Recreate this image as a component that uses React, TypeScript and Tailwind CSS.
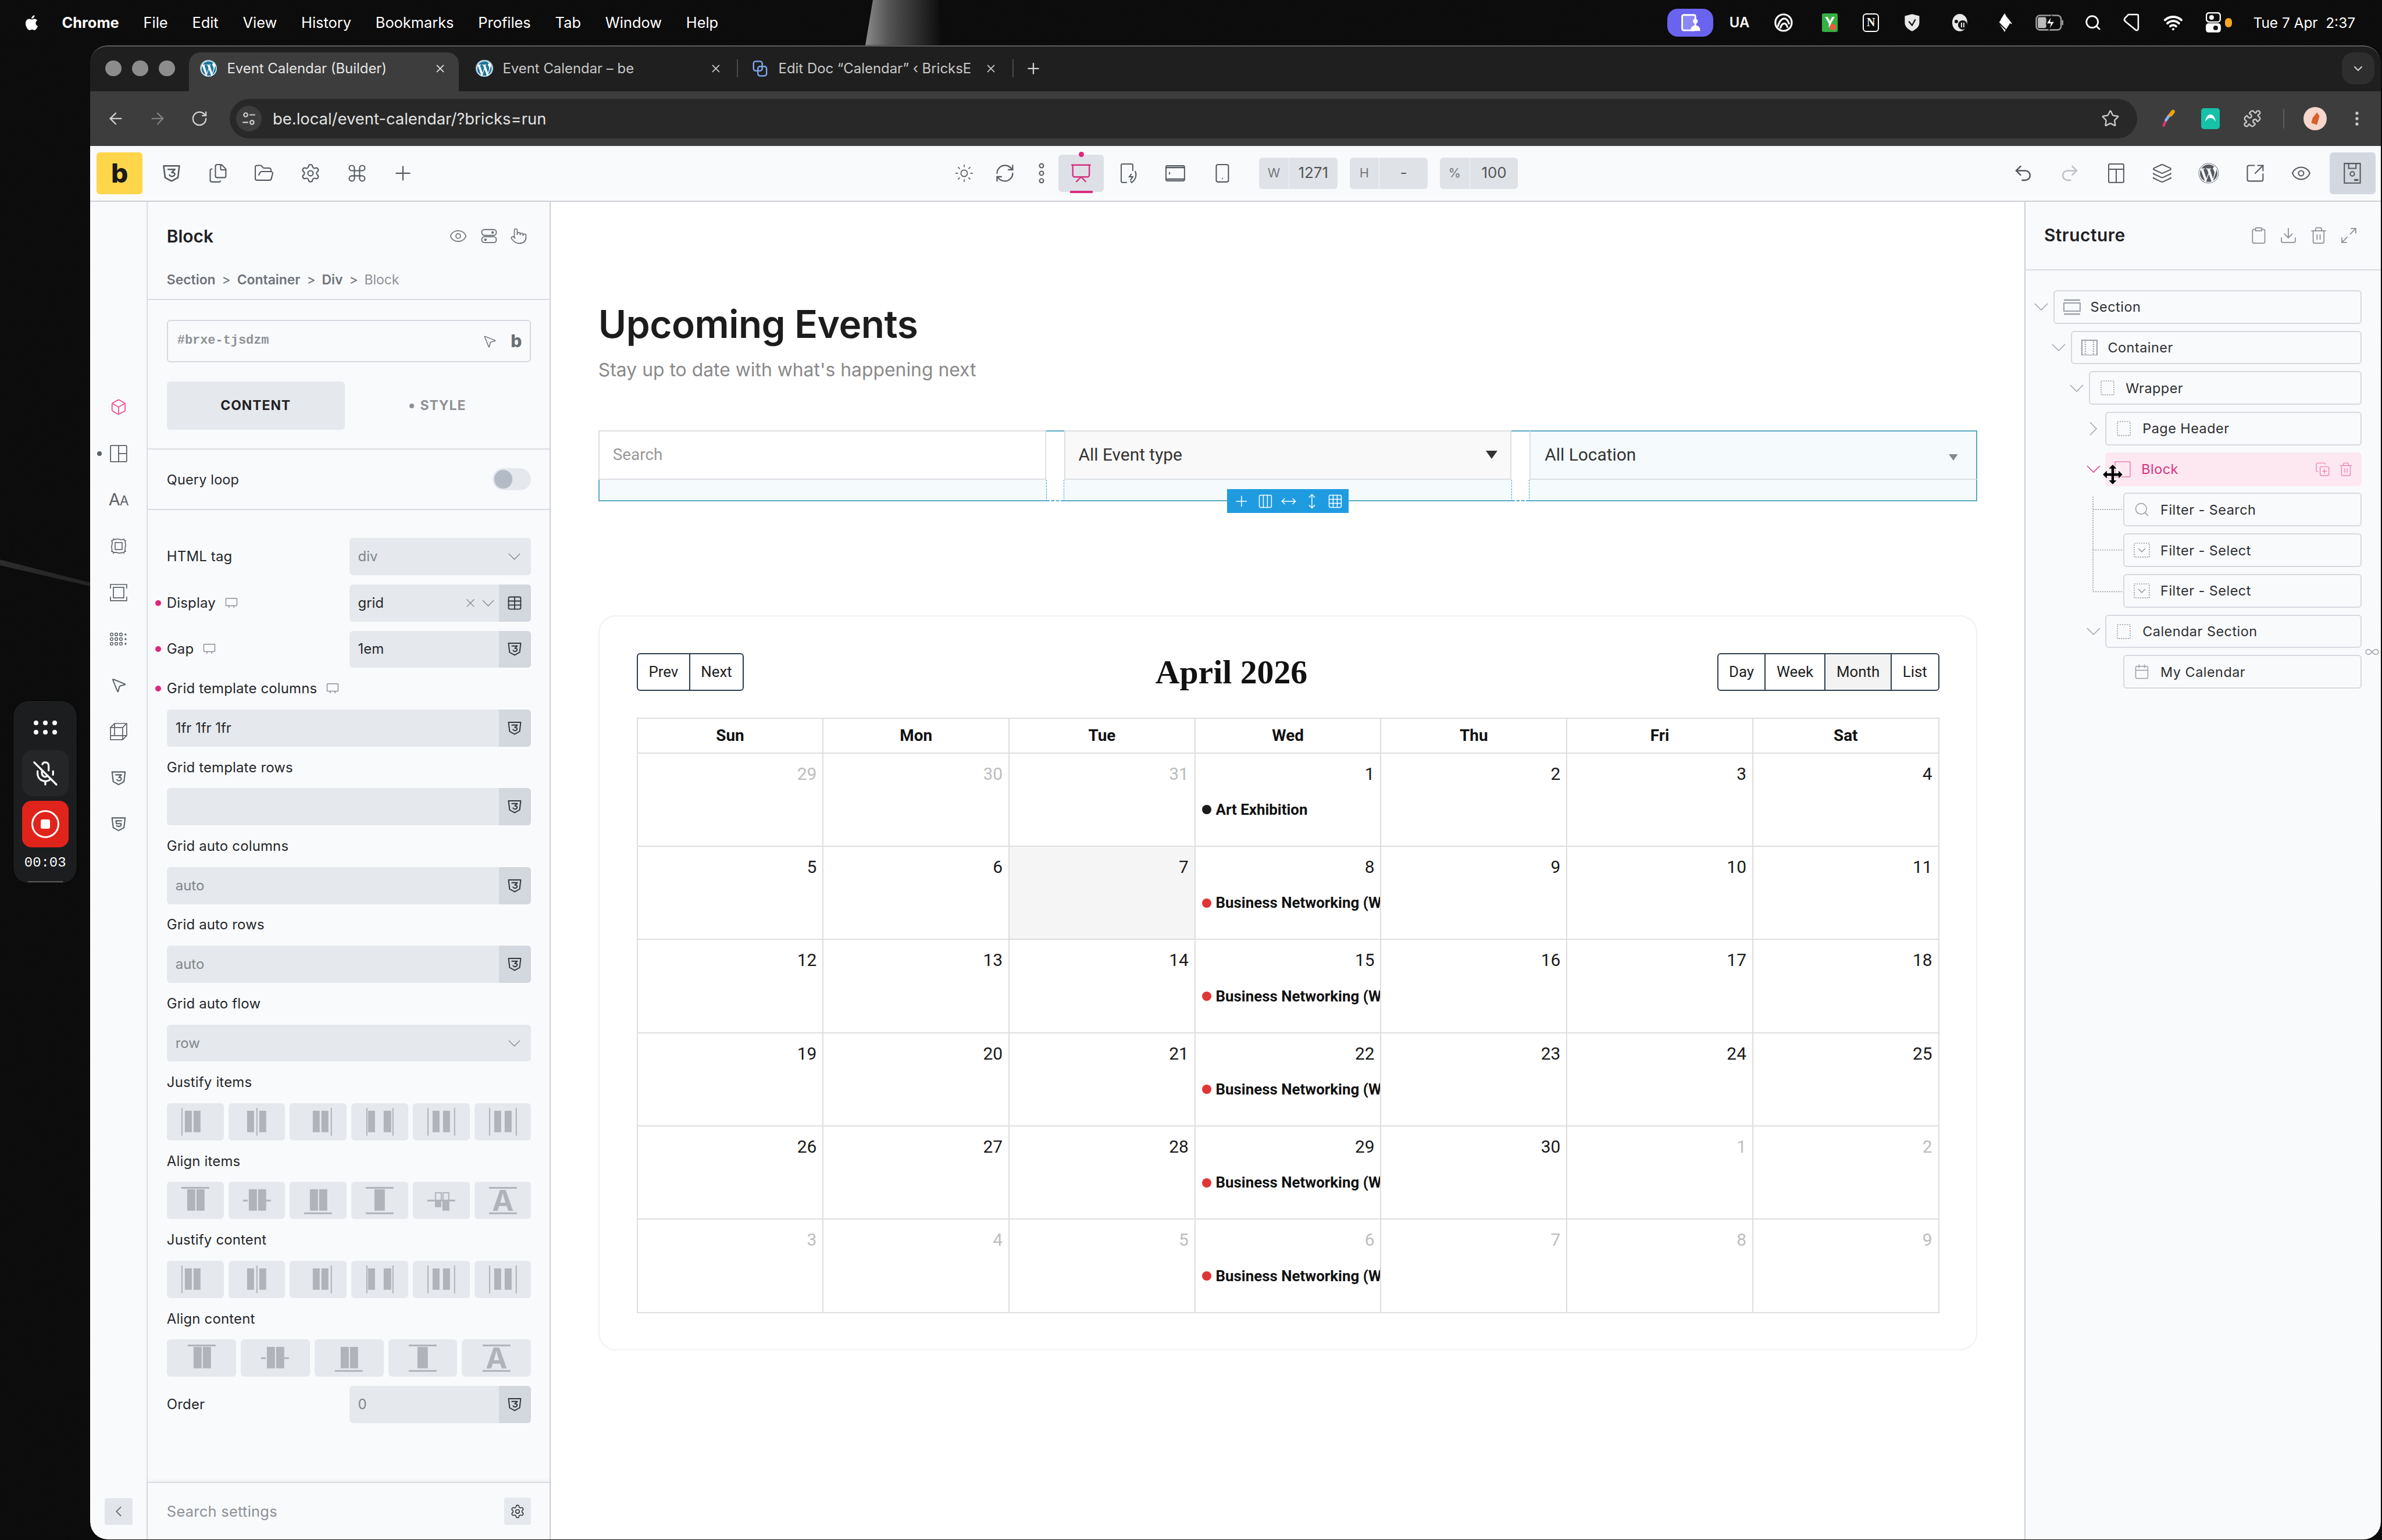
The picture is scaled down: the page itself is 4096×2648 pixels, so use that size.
import React from "react";
import { FaWordpress } from "react-icons/fa";
import {
  Eye, Settings, Command, Plus, ArrowLeft, ArrowRight, RotateCw, RefreshCw, Star, Sun, Search, Wifi, Box, Trash2, Download,
  Clipboard, ChevronDown, ChevronLeft, X, Grid3x3, Presentation, Smartphone, Undo2, Redo2, Layers,
  SquareArrowOutUpRight, Maximize2, MousePointer2, Pointer, Puzzle, MicOff, Files, FolderOpen, Calendar, CopyPlus,
  Infinity as InfinityIcon, Columns3, MoveHorizontal, MoveVertical, Table, EllipsisVertical,
} from "lucide-react";

const INTER = "font-['Inter',sans-serif]";

function Chev({ className = "", right = false }: { className?: string; right?: boolean }) {
  return right ? (
    <svg viewBox="0 0 14 26" className={className} fill="none" stroke="currentColor" strokeWidth="1.5"><path d="M1 1l12 12L1 25" /></svg>
  ) : (
    <svg viewBox="0 0 26 14" className={className} fill="none" stroke="currentColor" strokeWidth="1.5"><path d="M1 1l12 12L25 1" /></svg>
  );
}

function Css3({ className = "", five = false }: { className?: string; five?: boolean }) {
  return (
    <svg viewBox="0 0 24 24" fill="none" stroke="currentColor" strokeWidth="1.7" strokeLinejoin="round" strokeLinecap="round" className={className}>
      <path d="M3 3.5h18l-1.6 13.5L12 21l-7.4-4z" />
      {five ? <path d="M16 7.5H8.5l.4 4h6.6l-.4 3-3 1-3-1" /> : <path d="M8 7.5h8l-3.7 3.5c2.5 0 3.6.7 3.4 2.3-.2 1.6-2.2 2.7-4 2.2-1-.3-1.6-.7-2-1.4" />}
    </svg>
  );
}

function TwoBars({ className = "" }: { className?: string }) {
  return (
    <svg viewBox="0 0 24 24" fill="none" stroke="currentColor" strokeWidth="1.5" className={className}>
      <rect x="2" y="3" width="20" height="8" rx="3.5" />
      <rect x="2" y="13" width="20" height="8" rx="3.5" />
      <circle cx="17" cy="7" r="1" fill="currentColor" />
      <circle cx="7" cy="17" r="1" fill="currentColor" />
    </svg>
  );
}

function Wp({ className = "" }: { className?: string }) {
  return (
    <span className={"flex items-center justify-center rounded-full bg-white " + className}>
      <FaWordpress className="w-full h-full text-[#21759b]" />
    </span>
  );
}

function MenuBar() {
  const items = ["File", "Edit", "View", "History", "Bookmarks", "Profiles", "Tab", "Window", "Help"];
  return (
    <div className={"h-[78px] flex items-center text-white text-[25.5px] shrink-0 relative z-10 " + INTER}>
      <svg viewBox="0 0 24 24" fill="white" className="w-[32px] h-[34px] ml-[38px] mr-[37px]">
        <path d="M17.6 12.7c0-2.4 2-3.6 2.1-3.7-1.1-1.7-2.9-1.9-3.5-1.9-1.5-.2-2.9.9-3.7.9s-1.9-.9-3.2-.8c-1.6 0-3.1.9-4 2.4-1.7 2.9-.4 7.3 1.2 9.7.8 1.2 1.8 2.5 3.1 2.4 1.2 0 1.7-.8 3.2-.8s1.9.8 3.2.8 2.2-1.2 3-2.4c.9-1.4 1.3-2.7 1.3-2.8-.1 0-2.7-1-2.7-3.8zM15.1 5.5c.7-.8 1.1-2 1-3.1-1 0-2.2.7-2.9 1.5-.6.7-1.2 1.9-1 3 1.1.1 2.2-.6 2.9-1.4z" />
      </svg>
      <span className="font-bold mr-[42px]">Chrome</span>
      <div className="flex gap-[42px]">
        {items.map((m) => <span key={m}>{m}</span>)}
      </div>
      <div className="ml-auto mr-[34px] flex items-center">
        <div className="w-[80px] h-[48px] rounded-[18px] bg-[#6a63f0] flex items-center justify-center">
          <svg viewBox="0 0 30 30" className="w-[36px] h-[36px]" fill="none" stroke="white" strokeWidth="2.4">
            <rect x="3" y="4" width="19" height="22" rx="2" fill="#8d88f5" />
            <circle cx="22" cy="13" r="3.5" fill="white" stroke="none" />
            <path d="M15 27c0-6 3-8 7-8s7 2 7 8z" fill="white" stroke="none" />
          </svg>
        </div>
        <div className="w-[90px] flex justify-center font-semibold text-[24px]">UA</div>
        <div className="w-[62px] flex justify-center">
          <svg viewBox="0 0 24 24" className="w-[34px] h-[34px]" fill="none" stroke="white" strokeWidth="2.2">
            <circle cx="12" cy="12" r="10" />
            <path d="M5 17c2-7 5-10 8-10s5 4 6 7M8 19c1-4 3-6 5-6s3 2 4 5" />
          </svg>
        </div>
        <div className="w-[98px] flex justify-center">
          <div className="relative w-[28px] h-[32px] rounded-[3px] bg-[#35b043] flex items-center justify-center font-bold text-[24px] leading-none">
            Y
            <span className="absolute right-[3px] bottom-[3px] w-[11px] h-[11px] rounded-full bg-[#ef5a3a]" />
          </div>
        </div>
        <div className="w-[44px] flex justify-center">
          <div className="w-[28px] h-[32px] rounded-[6px] border-[2.02px] border-white flex items-center justify-center font-['Liberation_Serif',serif] font-bold text-[20px] leading-none">N</div>
        </div>
        <div className="w-[98px] flex justify-center">
          <svg viewBox="0 0 24 28" className="w-[28px] h-[32px]">
            <path d="M12 1l11 3v10c0 6-5 10-11 13C6 24 1 20 1 14V4z" fill="#e8e8e8" />
            <path d="M7 12l5 6 5-9" fill="none" stroke="#111" strokeWidth="2" />
          </svg>
        </div>
        <div className="w-[66px] flex justify-center">
          <svg viewBox="0 0 28 32" className="w-[28px] h-[32px]">
            <ellipse cx="14" cy="16" rx="13" ry="15" fill="#e8e8e8" />
            <circle cx="8" cy="14" r="3" fill="#111" />
            <circle cx="19" cy="20" r="8" fill="#111" />
            <path d="M17 16v8M21 16v8" stroke="#e8e8e8" strokeWidth="2" />
          </svg>
        </div>
        <div className="w-[90px] flex justify-center">
          <svg viewBox="0 0 28 32" className="w-[30px] h-[32px]">
            <path d="M14 0l10 16-10 16L4 16z" fill="white" />
            <path d="M4 16l14 14M2 19l10 11M7 10l-5 8" stroke="#111" strokeWidth="2" />
            <path d="M18 8l8 10" stroke="white" strokeWidth="2" />
          </svg>
        </div>
        <div className="w-[66px] flex justify-center">
          <svg viewBox="0 0 48 28" className="w-[50px] h-[30px]" fill="none">
            <rect x="1.5" y="2" width="41" height="24" rx="6" stroke="#9a9a9a" strokeWidth="2.5" />
            <rect x="4" y="5" width="14" height="18" rx="3" fill="#bbb" />
            <path d="M27 2l-9 14h7l-3 11 10-15h-7z" fill="white" stroke="#111" strokeWidth="1.5" />
            <path d="M45 10v8" stroke="#9a9a9a" strokeWidth="2.5" />
          </svg>
        </div>
        <div className="w-[82px] flex justify-center"><Search className="w-[30px] h-[30px]" strokeWidth={2.2} /></div>
        <div className="w-[52px] flex justify-center">
          <svg viewBox="0 0 28 32" className="w-[28px] h-[32px]" fill="none" stroke="white" strokeWidth="2.6">
            <path d="M9 2h15a2 2 0 012 2v22c0 2-2 4-4 3L5 15C2 13 1 11 3 8z" />
          </svg>
        </div>
        <div className="w-[92px] flex justify-center"><Wifi className="w-[34px] h-[34px]" strokeWidth={2.8} /></div>
        <div className="w-[46px] flex justify-center">
          <svg viewBox="0 0 26 36" className="w-[26px] h-[36px]">
            <rect x="1" y="1" width="24" height="16" rx="5" fill="none" stroke="white" strokeWidth="2.4" />
            <rect x="6" y="5" width="8" height="8" rx="4" fill="white" />
            <rect x="0" y="19" width="26" height="16" rx="5" fill="white" />
            <circle cx="17" cy="27" r="4" fill="#111" />
          </svg>
        </div>
        <span className="w-[12px] h-[16px] rounded-full bg-[#f5a623] -ml-[3px] mr-[37px]" />
        <div className="w-[188px] whitespace-nowrap text-[24.5px] font-normal">Tue 7 Apr&nbsp; 2:37</div>
      </div>
    </div>
  );
}

function TabClose({ dark = false }: { dark?: boolean }) {
  return <X className={dark ? "w-[22px] h-[22px] text-[#c8c8c8]" : "w-[22px] h-[22px] text-[#e0e0e0]"} strokeWidth={2} />;
}

function TabStrip() {
  return (
    <div className={"h-[80px] bg-[#1f1f1f] flex items-end border-t-[2.02px] border-[#5c5c5c] rounded-t-[30px] shrink-0 text-[24px] " + INTER}>
      <div className="h-full flex items-start pt-[24px] pl-[26px] gap-[18px] w-[170px]">
        <span className="w-[28px] h-[28px] rounded-full bg-[#8c8c8c]" />
        <span className="w-[28px] h-[28px] rounded-full bg-[#8c8c8c]" />
        <span className="w-[28px] h-[28px] rounded-full bg-[#8c8c8c]" />
      </div>
      <div className="relative w-[466px] h-[68px] bg-[#3d3d3d] rounded-t-[20px] flex items-center pl-[19px] pb-[12px] text-[#e6e6e6]">
        <Wp className="w-[30px] h-[30px] shrink-0" />
        <span className="ml-[17px] whitespace-nowrap">Event Calendar (Builder)</span>
        <span className="absolute left-[423px] top-[17px]"><TabClose /></span>
      </div>
      <div className="relative w-[482px] h-[68px] flex items-center pl-[29px] pb-[12px] text-[#c8c8c8]">
        <Wp className="w-[30px] h-[30px] shrink-0" />
        <span className="ml-[17px] whitespace-nowrap">Event Calendar – be</span>
        <span className="absolute left-[433px] top-[17px]"><TabClose dark /></span>
        <span className="absolute right-0 top-[12px] h-[32px] w-[2px] bg-[#4a4a4a]" />
      </div>
      <div className="relative w-[476px] h-[68px] flex items-center pl-[23px] pb-[12px] text-[#c8c8c8]">
        <svg viewBox="0 0 24 24" className="w-[30px] h-[30px] shrink-0" fill="none" stroke="#7aa2e8" strokeWidth="2">
          <rect x="3" y="2" width="12" height="13" rx="3" />
          <rect x="9" y="9" width="12" height="13" rx="3" />
        </svg>
        <span className="ml-[17px] whitespace-nowrap overflow-hidden w-[332px]">Edit Doc “Calendar” ‹ BricksE</span>
        <span className="absolute left-[426px] top-[17px]"><TabClose dark /></span>
        <span className="absolute right-0 top-[12px] h-[32px] w-[2px] bg-[#4a4a4a]" />
      </div>
      <div className="h-[68px] pb-[12px] flex items-center ml-[19px]">
        <Plus className="w-[30px] h-[30px] text-[#d6d6d6]" strokeWidth={1.8} />
      </div>
      <div className="ml-auto h-[56px] w-[56px] mb-[12px] mr-[11px] rounded-[20px] bg-[#2e2e2e] flex items-center justify-center">
        <ChevronDown className="w-[24px] h-[24px] text-[#d6d6d6]" strokeWidth={2} />
      </div>
    </div>
  );
}

function AddressBar() {
  const btn = "w-[72px] flex justify-center";
  return (
    <div className={"h-[94px] bg-[#3d3d3d] flex items-center pl-[8px] shrink-0 " + INTER}>
      <div className={btn}><ArrowLeft className="w-[32px] h-[32px] text-[#d0d0d0]" strokeWidth={1.8} /></div>
      <div className={btn}><ArrowRight className="w-[32px] h-[32px] text-[#808080]" strokeWidth={1.8} /></div>
      <div className={btn}><RotateCw className="w-[30px] h-[30px] text-[#d0d0d0]" strokeWidth={1.8} /></div>
      <div className="ml-[17px] w-[3293px] h-[68px] rounded-full bg-[#282828] flex items-center pl-[11px] pr-[30px]">
        <span className="w-[44px] h-[44px] rounded-full bg-[#3d3d3d] flex items-center justify-center">
          <svg viewBox="0 0 24 24" className="w-[26px] h-[26px]" fill="none" stroke="#d0d0d0" strokeWidth="2">
            <circle cx="7" cy="6" r="3" /><path d="M13 6h9M2 18h9" /><circle cx="17" cy="18" r="3" />
          </svg>
        </span>
        <span className="ml-[19px] text-[27.5px] text-[#e3e3e3]">be.local/event-calendar/?bricks=run</span>
        <Star className="ml-auto w-[32px] h-[32px] text-[#c8c8c8]" strokeWidth={1.8} />
      </div>
      <div className="w-[36px] ml-[37px] flex justify-center">
        <svg viewBox="0 0 24 24" className="w-[32px] h-[32px]" fill="none" strokeWidth="3.5" strokeLinecap="round">
          <path d="M5 21l3-7" stroke="#d6336c" /><path d="M8 14l4-6" stroke="#8ab4f8" /><path d="M14 7l3-4" stroke="#f59e0b" strokeWidth="5" />
        </svg>
      </div>
      <div className="w-[32px] h-[36px] ml-[37px] rounded-[5px] bg-[#16c2a8] flex items-center justify-center">
        <svg viewBox="0 0 24 24" className="w-[22px] h-[22px]" fill="white"><path d="M12 4c5 0 9 6 10 14-3-5-6-7-10-7s-7 2-10 7C3 10 7 4 12 4z" /></svg>
      </div>
      <div className="w-[36px] ml-[39px] flex justify-center"><Puzzle className="w-[32px] h-[32px] text-[#c8c8c8]" strokeWidth={1.8} /></div>
      <div className="w-[2px] h-[34px] bg-[#5c5c5c] ml-[35px]" />
      <div className="w-[40px] h-[40px] ml-[33px] rounded-full bg-[#f6d7cd] flex items-center justify-center">
        <svg viewBox="0 0 24 24" className="w-[26px] h-[30px]"><path d="M15 2l4 6-4 14-9-3 2-8z" fill="#d8602a" /></svg>
      </div>
      <div className="w-[36px] ml-[34px] flex justify-center"><EllipsisVertical className="w-[32px] h-[32px] text-[#c8c8c8]" strokeWidth={2} /></div>
    </div>
  );
}

function BarIcon({ children }: { children: React.ReactNode }) {
  return <div className="w-[80px] flex justify-center text-[#555a60]">{children}</div>;
}

function Dim({ l, v }: { l: string; v: string }) {
  return (
    <div className="w-[135px] h-[54px] rounded-[6px] bg-[#dfe3e8] flex items-center text-[26px]">
      <span className="w-[52px] text-center text-[#777] text-[22px] border-r border-[#f0f2f5] h-full flex items-center justify-center">{l}</span>
      <span className="flex-1 text-center text-[#555]">{v}</span>
    </div>
  );
}

function BuilderBar() {
  const ic = "w-[36px] h-[36px]";
  return (
    <div className={"h-[96px] bg-[#f9fafc] border-b-[2.02px] border-[#cdd0d4] flex items-center shrink-0 " + INTER}>
      <div className="ml-[11px] w-[79px] h-[72px] rounded-[6px] bg-[#ffd54a] flex items-center justify-center font-['Inter',sans-serif] font-extrabold text-[46px] text-[#1a1a1a] leading-none">b</div>
      <div className="ml-[10px] flex items-center">
        <BarIcon><Css3 className={ic} /></BarIcon>
        <BarIcon><Files className={ic} strokeWidth={1.4} /></BarIcon>
        <BarIcon><FolderOpen className={ic} strokeWidth={1.4} /></BarIcon>
        <BarIcon><Settings className={ic} strokeWidth={1.4} /></BarIcon>
        <BarIcon><Command className={ic} strokeWidth={1.4} /></BarIcon>
        <BarIcon><Plus className="w-[40px] h-[40px]" strokeWidth={1.3} /></BarIcon>
      </div>
      <div className="ml-[894px] flex items-center text-[#555a60]">
        <div className="w-[70px] flex justify-center"><Sun className="w-[34px] h-[34px]" strokeWidth={1.2} /></div>
        <div className="w-[70px] flex justify-center"><RefreshCw className="w-[36px] h-[36px]" strokeWidth={1.5} /></div>
        <div className="w-[57px] flex justify-center">
          <svg viewBox="0 0 12 36" className="w-[12px] h-[36px]" fill="none" stroke="currentColor" strokeWidth="2"><circle cx="6" cy="5" r="3.5" /><circle cx="6" cy="18" r="3.5" /><circle cx="6" cy="31" r="3.5" /></svg>
        </div>
        <div className="relative w-[79px] h-[64px] rounded-[6px] bg-[#dde0e6] flex items-center justify-center text-[#d6307f]">
          <span className="absolute -top-[5px] left-[36px] w-[9px] h-[9px] rounded-full bg-[#e0267c]" />
          <Presentation className="w-[38px] h-[38px]" strokeWidth={1.5} />
          <span className="absolute -bottom-[2px] left-[20px] w-[40px] h-[4px] bg-[#d6307f]" />
        </div>
        <div className="w-[81px] ml-[2px] flex justify-center">
          <svg viewBox="0 0 30 36" className="w-[34px] h-[36px]" fill="none" stroke="currentColor" strokeWidth="2"><path d="M14 2H4a2 2 0 00-2 2v28a2 2 0 002 2h8M14 2h6a2 2 0 012 2v10" /><path d="M26 14c3 6 2 14-6 20l-2-3" /><path d="M20 19l-4 5h6l-4 6" /></svg>
        </div>
        <div className="w-[81px] flex justify-center">
          <svg viewBox="0 0 36 30" className="w-[36px] h-[30px]" fill="none" stroke="currentColor" strokeWidth="2"><rect x="2" y="2" width="32" height="26" rx="2.5" /><path d="M2 5h32M2 25h32" strokeWidth="2.5" /><path d="M8 13v4" /></svg>
        </div>
        <div className="w-[81px] flex justify-center"><Smartphone className="w-[36px] h-[38px]" strokeWidth={1.4} /></div>
        <div className="ml-[23px] flex gap-[21px]">
          <Dim l="W" v="1271" />
          <Dim l="H" v="-" />
          <Dim l="%" v="100" />
        </div>
      </div>
      <div className="ml-auto flex items-center">
        <BarIcon><Undo2 className={ic} strokeWidth={1.7} /></BarIcon>
        <BarIcon><Redo2 className={ic + " text-[#bcbfc4]"} strokeWidth={1.7} /></BarIcon>
        <BarIcon>
          <svg viewBox="0 0 30 36" className="w-[30px] h-[36px]" fill="none" stroke="currentColor" strokeWidth="2"><rect x="2" y="2" width="26" height="32" rx="2" /><path d="M2 11h26M15 11v23" /></svg>
        </BarIcon>
        <BarIcon><Layers className={ic} strokeWidth={1.4} /></BarIcon>
        <BarIcon><FaWordpress className={ic} /></BarIcon>
        <BarIcon><SquareArrowOutUpRight className={ic} strokeWidth={1.4} /></BarIcon>
        <BarIcon><Eye className={ic} strokeWidth={1.4} /></BarIcon>
        <div className="ml-[9px] mr-[9px] w-[79px] h-[72px] rounded-[6px] bg-[#d3d8e0] flex items-center justify-center text-[#555a60]">
          <svg viewBox="0 0 30 36" className="w-[32px] h-[38px]" fill="none" stroke="currentColor" strokeWidth="2">
            <path d="M2 2h26v32H2z" /><path d="M9 2v8h12V2" /><circle cx="15" cy="19" r="3.5" /><path d="M18 29h7" strokeWidth="3" />
          </svg>
        </div>
      </div>
    </div>
  );
}

function RailIcon({ children, dot = false }: { children: React.ReactNode; dot?: boolean }) {
  return (
    <div className="relative h-[80px] flex items-center justify-center text-[#5b6066]">
      {dot && <span className="absolute left-[12px] top-[36px] w-[8px] h-[8px] rounded-full bg-[#5b6066]" />}
      {children}
    </div>
  );
}

function Rail() {
  const s = "w-[30px] h-[30px]";
  return (
    <div className={"w-[99px] shrink-0 bg-[#f9fafc] border-r-[2.02px] border-[#d9dce1] flex flex-col pt-[315px] rounded-bl-[30px] " + INTER}>
      <RailIcon><Box className={s + " text-[#e8589a]"} strokeWidth={1.5} /></RailIcon>
      <RailIcon dot>
        <svg viewBox="0 0 28 28" className={s} fill="none" stroke="currentColor" strokeWidth="1.7"><rect x="1" y="1" width="26" height="26" rx="1" /><path d="M14 1v26M14 14h13" /></svg>
      </RailIcon>
      <RailIcon><span className="text-[29px] leading-none tracking-[-1px]">A<span className="text-[23px]">A</span></span></RailIcon>
      <RailIcon>
        <svg viewBox="0 0 30 30" className={s} fill="none" stroke="currentColor" strokeWidth="1.6"><path d="M6 3c3 2 6-1 9 0s6 2 9 0c1 3 3 3 3 3-2 3 1 6 0 9s-2 6 0 9c-3 0-3 3-3 3-3-2-6 1-9 0s-6-2-9 0c0-3-3-3-3-3 2-3-1-6 0-9s2-6 0-9c3 0 3-3 3-3z" /><rect x="9" y="9" width="12" height="12" /></svg>
      </RailIcon>
      <RailIcon>
        <svg viewBox="0 0 30 30" className={s} fill="none" stroke="currentColor" strokeWidth="1.7"><path d="M1 8V1h28v7M1 22v7h28v-7" /><rect x="6" y="6" width="18" height="18" /></svg>
      </RailIcon>
      <RailIcon>
        <svg viewBox="0 0 30 24" className="w-[30px] h-[24px]" fill="none" stroke="currentColor" strokeWidth="1.5">
          {[4, 12, 20].map((y) => (
            <g key={y}><circle cx="3" cy={y} r="2.4" /><circle cx="11" cy={y} r="2.4" /><circle cx="19" cy={y} r="2.4" /><circle cx="27" cy={y} r="1" fill="currentColor" /></g>
          ))}
        </svg>
      </RailIcon>
      <RailIcon><MousePointer2 className={s} strokeWidth={1.6} /></RailIcon>
      <RailIcon>
        <svg viewBox="0 0 30 30" className={s} fill="none" stroke="currentColor" strokeWidth="1.7"><rect x="1" y="8" width="21" height="21" /><path d="M8 1h21v21H8zM1 8l7-7M22 8l7-7M22 29l7-7M8 1v21H1M8 22h14" /></svg>
      </RailIcon>
      <RailIcon><Css3 className={s} /></RailIcon>
      <RailIcon><Css3 className={s} five /></RailIcon>
      <div className="mt-auto mb-[25px] self-center w-[48px] h-[47px] rounded-[4px] bg-[#e2e5ea] flex items-center justify-center">
        <ChevronLeft className="w-[30px] h-[30px] text-[#5b6066]" strokeWidth={1.3} />
      </div>
    </div>
  );
}

function Label({ children, dot = false, mon = false }: { children: React.ReactNode; dot?: boolean; mon?: boolean }) {
  return (
    <div className="relative flex items-center text-[24px] text-[#25272a] tracking-[0.2px] h-[36px] whitespace-nowrap">
      {dot && <span className="absolute -left-[20px] top-[13px] w-[10px] h-[10px] rounded-full bg-[#e0267c]" />}
      {children}
      {mon && (
        <svg viewBox="0 0 24 22" className="ml-[15px] w-[24px] h-[20px] text-[#8a8f95]" fill="none" stroke="currentColor" strokeWidth="1.6"><rect x="1.5" y="2" width="21" height="14" rx="1" /><path d="M7 20l1-4M17 20l-1-4" /></svg>
      )}
    </div>
  );
}

function Field({ v, muted = true, addon = true, chevron = false, className = "w-full" }: { v: string; muted?: boolean; addon?: boolean; chevron?: boolean; className?: string }) {
  return (
    <div className={"h-[64px] rounded-[6px] bg-[#e5e8ec] flex items-center overflow-hidden text-[24px] shrink-0 " + className}>
      <span className={"flex-1 pl-[15px] " + (muted ? "text-[#80858b]" : "text-[#25272a]")}>{v}</span>
      {chevron && <Chev className="mr-[18px] w-[21px] h-[12px] text-[#7d8288]" />}
      {addon && (
        <span className="w-[56px] h-full bg-[#d3d7de] flex items-center justify-center text-[#33363a]"><Css3 className="w-[28px] h-[28px]" /></span>
      )}
    </div>
  );
}

const B = "#b0b4ba";
function Bars({ k }: { k: string }) {
  const r = (x: number, y: number, w: number, h: number, key: string) => <rect key={key} x={x} y={y} width={w} height={h} fill={B} />;
  const v = (x: number) => r(x, 8, 2, 48, "l" + x);
  const h1 = (x: number, w: number) => r(x, 13, w, 37, "b" + x);
  const t = r(25, 9, 48, 3, "t");
  const b = r(25, 53, 48, 3, "bo");
  const content: Record<string, React.ReactNode[]> = {
    js: [v(25), h1(31, 12), h1(46, 12)],
    jc: [h1(32, 12), v(48), h1(53, 12)],
    je: [h1(40, 12), h1(55, 12), v(71)],
    jb: [v(26), h1(29, 12), h1(56, 13), v(71)],
    ja: [v(25), h1(34, 12), h1(52, 12), v(71)],
    as: [t, h1(35, 14), h1(51, 14)],
    ac: [r(25, 31, 8, 3, "a"), r(65, 31, 8, 3, "c"), h1(35, 14), h1(51, 14)],
    ae: [b, h1(35, 14), h1(51, 14)],
    at: [t, b, h1(40, 18)],
    ab: [
      r(25, 31, 48, 3, "m"), r(38, 33, 11, 11, "l"), r(51, 33, 12, 17, "rr"),
      <rect key="o1" x="39" y="19" width="10" height="13" fill="none" stroke={B} strokeWidth="2" />,
      <rect key="o2" x="52" y="19" width="10" height="13" fill="none" stroke={B} strokeWidth="2" />,
    ],
    aa: [
      t, b,
      <text key="A" x="49" y="50" textAnchor="middle" fontSize="50" fontWeight="700" fontFamily="Inter, sans-serif" fill={B}>A</text>,
    ],
  };
  return <svg viewBox="0 0 98 64" className="w-[98px] h-[64px]">{content[k]}</svg>;
}

function BtnRow({ keys }: { keys: string[] }) {
  return (
    <div className="flex gap-[8px]">
      {keys.map((k, i) => (
        <div key={k + i} className="flex-1 h-[64px] rounded-[6px] bg-[#e5e8ec] flex items-center justify-center"><Bars k={k} /></div>
      ))}
    </div>
  );
}

function SettingsPanel() {
  const lab = "mt-[18px] mb-[18px]";
  return (
    <div className={"w-[696px] shrink-0 bg-[#f9fafc] border-r-[2.02px] border-[#cdd0d4] flex flex-col " + INTER}>
      <div className="border-b-[2.02px] border-[#d9dce1] h-[170px] pl-[33px] pr-[32px]">
        <div className="h-[120px] flex items-center">
          <span className="text-[30px] font-semibold text-[#1f2124]">Block</span>
          <div className="ml-auto flex items-center gap-[22px] text-[#6b7076] mr-[6px]">
            <Eye className="w-[32px] h-[32px]" strokeWidth={1.3} />
            <TwoBars className="w-[30px] h-[30px]" />
            <Pointer className="w-[30px] h-[30px]" strokeWidth={1.3} />
          </div>
        </div>
        <div className="h-[30px] flex items-center text-[23px] text-[#6e7379]">
          <b className="font-semibold">Section</b><span className="mx-[11px]">&gt;</span>
          <b className="font-semibold">Container</b><span className="mx-[11px]">&gt;</span>
          <b className="font-semibold">Div</b><span className="mx-[11px]">&gt;</span>
          <span className="text-[#8d9197]">Block</span>
        </div>
      </div>
      <div className="border-b-[2.02px] border-[#d9dce1] h-[258px] pl-[33px] pr-[32px] pt-[34px]">
        <div className="h-[74px] rounded-[6px] border-[2.02px] border-[#d6d9de] flex items-center pl-[16px] pr-[14px]">
          <span className="font-['Liberation_Mono',monospace] font-bold text-[22px] text-[#8d9197]">#brxe-tjsdzm</span>
          <MousePointer2 className="ml-auto w-[26px] h-[26px] text-[#6b7076]" strokeWidth={1.4} />
          <span className="ml-[24px] font-extrabold text-[30px] text-[#6b7076] leading-none">b</span>
        </div>
        <div className="mt-[33px] flex h-[83px]">
          <div className="w-[307px] rounded-[6px] bg-[#e5e8ec] flex items-center justify-center font-bold text-[23px] tracking-[1px] text-[#1f2124]">CONTENT</div>
          <div className="flex-1 flex items-center justify-center font-bold text-[23px] tracking-[1px] text-[#8d9197]">
            <span className="w-[8px] h-[8px] rounded-full bg-[#8d9197] mr-[10px]" />STYLE
          </div>
        </div>
      </div>
      <div className="border-b-[2.02px] border-[#d9dce1] h-[105px] pl-[33px] pr-[32px] flex items-center">
        <span className="text-[23.5px] text-[#25272a] tracking-[0.2px]">Query loop</span>
        <span className="ml-auto w-[67px] h-[38px] rounded-full bg-[#e5e8ec] flex items-center pl-[3px]">
          <span className="w-[32px] h-[32px] rounded-full bg-[#b3bbc6]" />
        </span>
      </div>
      <div className="pl-[33px] pr-[32px] pt-[48px] flex flex-col">
        <div className="flex flex-col gap-[16px]">
          <div className="flex items-center justify-between">
            <Label>HTML tag</Label>
            <Field v="div" addon={false} chevron className="w-[314px]" />
          </div>
          <div className="flex items-center justify-between">
            <Label dot mon>Display</Label>
            <div className="w-[314px] h-[64px] rounded-[6px] bg-[#e5e8ec] flex items-center overflow-hidden text-[24px]">
              <span className="flex-1 pl-[15px] text-[#25272a]">grid</span>
              <X className="w-[24px] h-[24px] text-[#7d8288]" strokeWidth={1.2} />
              <Chev className="ml-[8px] mr-[8px] w-[21px] h-[12px] text-[#7d8288]" />
              <span className="w-[56px] h-full bg-[#d3d7de] flex items-center justify-center text-[#33363a]"><Table className="w-[28px] h-[28px]" strokeWidth={1.6} /></span>
            </div>
          </div>
          <div className="flex items-center justify-between">
            <Label dot mon>Gap</Label>
            <Field v="1em" muted={false} className="w-[314px]" />
          </div>
        </div>
        <div className={lab}><Label dot mon>Grid template columns</Label></div>
        <Field v="1fr 1fr 1fr" muted={false} />
        <div className={lab}><Label>Grid template rows</Label></div>
        <Field v="" />
        <div className={lab}><Label>Grid auto columns</Label></div>
        <Field v="auto" />
        <div className={lab}><Label>Grid auto rows</Label></div>
        <Field v="auto" />
        <div className={lab}><Label>Grid auto flow</Label></div>
        <Field v="row" addon={false} chevron />
        <div className={lab}><Label>Justify items</Label></div>
        <BtnRow keys={["js", "jc", "je", "jb", "ja", "ja"]} />
        <div className={lab}><Label>Align items</Label></div>
        <BtnRow keys={["as", "ac", "ae", "at", "ab", "aa"]} />
        <div className={lab}><Label>Justify content</Label></div>
        <BtnRow keys={["js", "jc", "je", "jb", "ja", "ja"]} />
        <div className={lab}><Label>Align content</Label></div>
        <BtnRow keys={["as", "ac", "ae", "at", "aa"]} />
        <div className="mt-[16px] flex items-center justify-between">
          <Label>Order</Label>
          <Field v="0" className="w-[314px]" />
        </div>
      </div>
      <div className="mt-auto h-[100px] border-t-[2.02px] border-[#d9dce1] shadow-[0_-2px_6px_rgba(0,0,0,0.06)] pl-[33px] pr-[32px] flex items-center">
        <span className="text-[25.5px] text-[#8d9197] tracking-[0.3px]">Search settings</span>
        <span className="ml-auto w-[47px] h-[47px] rounded-[4px] bg-[#e5e8ec] flex items-center justify-center">
          <Settings className="w-[26px] h-[26px] text-[#33363a]" strokeWidth={1.5} />
        </span>
      </div>
    </div>
  );
}

function FilterRow() {
  const stripe = "h-[38px] bg-[#f5fafd] border-b-[2.02px] border-[#5aa9c4]";
  return (
    <div className="relative flex h-[123px]">
      <div className="w-[773px] flex flex-col">
        <div className="h-[85px] border-[2.02px] border-[#dcdfe3] bg-white flex items-center pl-[23px] text-[28px] text-[#999] font-['Roboto',sans-serif]">Search</div>
        <div className={stripe + " border-l-[2.02px]"} />
      </div>
      <div className="w-[31px] flex flex-col border-t-[2.02px] border-[#5aa9c4]">
        <div className="h-[83px]" />
        <div className="flex-1 border-x border-dashed border-[#2a9fd8] border-b-[2.02px] border-b-[#5aa9c4]" />
      </div>
      <div className="w-[772px] flex flex-col">
        <div className="h-[85px] border-[2.02px] border-[#dcdfe3] bg-[#f9f9f9] flex items-center pl-[23px] pr-[22px] text-[30px] text-[#333] font-['Roboto',sans-serif]">
          All Event type
          <svg viewBox="0 0 20 14" className="ml-auto w-[20px] h-[14px]"><path d="M0 0h20L10 14z" fill="#333" /></svg>
        </div>
        <div className={stripe} />
      </div>
      <div className="w-[32px] flex flex-col border-t-[2.02px] border-[#5aa9c4]">
        <div className="h-[83px]" />
        <div className="flex-1 border-x border-dashed border-[#2a9fd8] border-b-[2.02px] border-b-[#5aa9c4]" />
      </div>
      <div className="flex-1 flex flex-col">
        <div className="h-[85px] border-[2.02px] border-t-[#5aa9c4] border-r-[#5aa9c4] border-l-[#dcdfe3] border-b-[#dcdfe3] bg-[#f5fafd] flex items-center pl-[24px] pr-[32px] text-[30px] text-[#333] font-['Roboto',sans-serif]">
          All Location
          <svg viewBox="0 0 20 14" className="ml-auto mt-[8px] w-[16px] h-[11px]"><path d="M0 0h20L10 14z" fill="#888" /></svg>
        </div>
        <div className={stripe + " border-r-[2.02px] border-r-[#5aa9c4]"} />
      </div>
      <div className="absolute left-[1086px] top-[101px] w-[209px] h-[42px] bg-[#1f9ce0] flex items-center justify-around px-[3px] text-white">
        <Plus className="w-[30px] h-[30px]" strokeWidth={1.3} />
        <Columns3 className="w-[28px] h-[28px]" strokeWidth={1.3} />
        <MoveHorizontal className="w-[28px] h-[28px]" strokeWidth={1.3} />
        <MoveVertical className="w-[28px] h-[28px]" strokeWidth={1.3} />
        <Grid3x3 className="w-[28px] h-[28px]" strokeWidth={1.3} />
      </div>
    </div>
  );
}

type Ev = { t: string; c: string } | null;
const ART: Ev = { t: "Art Exhibition", c: "bg-[#1a1a1a]" };
const BIZ: Ev = { t: "Business Networking (Weekly)", c: "bg-[#e03636]" };

function Cell({ n, grey = false, ev = null, today = false }: { n: number; grey?: boolean; ev?: Ev; today?: boolean }) {
  return (
    <div className={"h-[161px] border-r-[2.02px] border-b-[2.02px] border-[#dedede] pt-[15px] " + (today ? "bg-[#f5f5f5]" : "bg-white")}>
      <div className={"h-[40px] leading-[40px] text-right pr-[10px] text-[30px] " + (grey ? "text-[#bdbdbd]" : "text-[#1a1a1a]")}>{n}</div>
      {ev && (
        <div className="mt-[27px] h-[30px] flex items-center pl-[11px] pr-[5px] overflow-hidden">
          <span className={"w-[16px] h-[16px] rounded-full shrink-0 " + ev.c} />
          <span className="ml-[8px] font-bold text-[26px] text-[#111] whitespace-nowrap">{ev.t}</span>
        </div>
      )}
    </div>
  );
}

function CalBtn({ t, w, last = false, active = false }: { t: string; w: string; last?: boolean; active?: boolean }) {
  return (
    <div className={"h-full flex items-center justify-center text-[26px] text-[#212121] " + w + (last ? "" : " border-r-[2.02px] border-[#2c3e50]") + (active ? " bg-[#f3f3f3]" : "")}>{t}</div>
  );
}

function CalendarCard() {
  const rows: number[][] = [
    [29, 30, 31, 1, 2, 3, 4],
    [5, 6, 7, 8, 9, 10, 11],
    [12, 13, 14, 15, 16, 17, 18],
    [19, 20, 21, 22, 23, 24, 25],
    [26, 27, 28, 29, 30, 1, 2],
    [3, 4, 5, 6, 7, 8, 9],
  ];
  return (
    <div className="mt-[196px] h-[1269px] rounded-[30px] border-[2.02px] border-[#f0f0f0] p-[64px] font-['Roboto',sans-serif]">
      <div className="relative h-[65px] flex items-center justify-between">
        <div className="h-[65px] flex rounded-[6px] border-[2.02px] border-[#2c3e50] overflow-hidden">
          <CalBtn t="Prev" w="w-[91px]" />
          <CalBtn t="Next" w="w-[90px]" last />
        </div>
        <h2 className="absolute left-[877px] top-[3px] w-[300px] text-center font-['Liberation_Serif',serif] font-bold text-[58px] leading-[60px] text-[#111]">April 2026</h2>
        <div className="h-[65px] flex rounded-[6px] border-[2.02px] border-[#2c3e50] overflow-hidden">
          <CalBtn t="Day" w="w-[81px]" />
          <CalBtn t="Week" w="w-[104px]" />
          <CalBtn t="Month" w="w-[114px]" active />
          <CalBtn t="List" w="w-[80px]" last />
        </div>
      </div>
      <div className="mt-[46px] grid grid-cols-7 border-l-[2.02px] border-t-[2.02px] border-[#dedede]">
        {["Sun", "Mon", "Tue", "Wed", "Thu", "Fri", "Sat"].map((d) => (
          <div key={d} className="h-[60px] border-r-[2.02px] border-b-[2.02px] border-[#dedede] flex items-center justify-center font-bold text-[28px] text-[#111]">{d}</div>
        ))}
        {rows.map((r, ri) =>
          r.map((n, ci) => {
            const grey = (ri === 0 && ci < 3) || (ri === 4 && ci > 4) || ri === 5;
            let ev: Ev = null;
            if (ci === 3) ev = ri === 0 ? ART : BIZ;
            return <Cell key={ri + "-" + ci} n={n} grey={grey} ev={ev} today={ri === 1 && ci === 2} />;
          })
        )}
      </div>
    </div>
  );
}

function Canvas() {
  return (
    <div className={"flex-1 min-w-0 bg-white px-[82px] pt-[172px] " + INTER}>
      <h1 className="h-[80px] leading-[80px] text-[66px] font-semibold text-[#1c1c1c] tracking-[-0.5px]">Upcoming Events</h1>
      <p className="mt-[19px] h-[40px] leading-[40px] text-[32px] text-[#8a8a8a]">Stay up to date with what's happening next</p>
      <div className="mt-[84px]"><FilterRow /></div>
      <CalendarCard />
    </div>
  );
}

function RowIcon({ k, pink = false }: { k: string; pink?: boolean }) {
  const c = pink ? "#ee86b6" : "#9a9ea4";
  const cls = "w-[30px] h-[28px]";
  const dash = "2 2";
  if (k === "section") return <svg viewBox="0 0 30 28" className={cls} fill="none" stroke={c} strokeWidth="2"><path d="M1 2h28M1 26h28" strokeWidth="2.5" /><rect x="1" y="7" width="28" height="14" /></svg>;
  if (k === "container") return <svg viewBox="0 0 30 28" className={cls} fill="none" stroke={c} strokeWidth="2"><rect x="2" y="1" width="26" height="26" /><path d="M8 3v22M22 3v22" strokeDasharray={dash} /></svg>;
  if (k === "div") return <svg viewBox="0 0 30 28" className={cls} fill="none" stroke={c} strokeWidth="1.6"><rect x="4" y="2" width="22" height="24" strokeDasharray={dash} /></svg>;
  if (k === "block") return <svg viewBox="0 0 30 28" className={cls} fill="none" stroke={c} strokeWidth="1.6"><rect x="2" y="1" width="26" height="26" /></svg>;
  if (k === "search") return <Search className={cls} color={c} strokeWidth={1.3} />;
  if (k === "select") return <svg viewBox="0 0 30 28" className={cls} fill="none" stroke={c} strokeWidth="1.6"><rect x="2" y="2" width="26" height="24" strokeDasharray={dash} /><path d="M9 11l6 6 6-6" /></svg>;
  return <Calendar className={cls} color={c} strokeWidth={1.3} />;
}

function TreeRow({ pl, label, icon, chev = "", pink = false }: { pl: string; label: string; icon: string; chev?: string; pink?: boolean }) {
  return (
    <div className={"flex items-center h-[58px] " + pl}>
      <div className="w-[42px] flex justify-center shrink-0">
        {chev === "d" && <Chev className={"w-[24px] h-[13px] " + (pink ? "text-[#d9337f]" : "text-[#9a9ea4]")} />}
        {chev === "r" && <Chev right className="w-[13px] h-[24px] text-[#9a9ea4]" />}
      </div>
      <div className={"relative flex-1 h-[58px] rounded-[6px] flex items-center text-[23.5px] tracking-[0.5px] " + (pink ? "bg-[#fde8f1] text-[#d9337f]" : "border-[2.02px] border-[#d6d9de] text-[#2c2e31]")}>
        <span className="absolute left-[15px]"><RowIcon k={icon} pink={pink} /></span>
        <span className="pl-[62px]">{label}</span>
        {pink && (
          <span className="ml-auto mr-[14px] flex gap-[14px] text-[#ee86b6]">
            <CopyPlus className="w-[26px] h-[26px]" strokeWidth={1.3} />
            <Trash2 className="w-[26px] h-[26px]" strokeWidth={1.3} />
          </span>
        )}
      </div>
    </div>
  );
}

function Structure() {
  return (
    <div className={"w-[615px] shrink-0 bg-[#f9fafc] border-l-[2.02px] border-[#cdd0d4] flex flex-col -ml-[1px] rounded-br-[20px] " + INTER}>
      <div className="h-[119px] border-b-[2.02px] border-[#d9dce1] flex items-center pl-[32px] pr-[39px]">
        <span className="text-[30px] font-semibold text-[#1f2124] tracking-[0.5px]">Structure</span>
        <div className="ml-auto flex items-center gap-[20px] text-[#8a8f95]">
          <Clipboard className="w-[32px] h-[32px]" strokeWidth={1.3} />
          <Download className="w-[32px] h-[32px]" strokeWidth={1.3} />
          <Trash2 className="w-[32px] h-[32px]" strokeWidth={1.3} />
          <Maximize2 className="w-[32px] h-[32px]" strokeWidth={1.3} />
        </div>
      </div>
      <div className="relative pt-[34px] pr-[33px] flex flex-col gap-[12px]">
        <TreeRow pl="pl-[6px]" label="Section" icon="section" chev="d" />
        <TreeRow pl="pl-[36px]" label="Container" icon="container" chev="d" />
        <TreeRow pl="pl-[67px]" label="Wrapper" icon="div" chev="d" />
        <TreeRow pl="pl-[96px]" label="Page Header" icon="div" chev="r" />
        <TreeRow pl="pl-[96px]" label="Block" icon="block" chev="d" pink />
        <TreeRow pl="pl-[127px]" label="Filter - Search" icon="search" />
        <TreeRow pl="pl-[127px]" label="Filter - Select" icon="select" />
        <TreeRow pl="pl-[127px]" label="Filter - Select" icon="select" />
        <TreeRow pl="pl-[96px]" label="Calendar Section" icon="div" chev="d" />
        <TreeRow pl="pl-[127px]" label="My Calendar" icon="cal" />
        <svg className="absolute left-[114px] top-[390px] w-[54px] h-[176px]" viewBox="0 0 54 176" fill="none" stroke="#a8acb2" strokeWidth="2" strokeDasharray="2 2">
          <path d="M2 0v164h50M2 22h50M2 92h50" />
        </svg>
        <InfinityIcon className="absolute left-[585px] top-[645px] w-[26px] h-[26px] text-[#9a9ea4]" strokeWidth={1.4} />
        <svg viewBox="0 0 32 32" className="absolute left-[132px] top-[334px] w-[36px] h-[36px]">
          <path d="M16 1l6 6h-4v7h7v-4l6 6-6 6v-4h-7v7h4l-6 6-6-6h4v-7H7v4l-6-6 6-6v4h7V7h-4z" fill="#000" stroke="#fff" strokeWidth="1.8" paintOrder="stroke" />
        </svg>
      </div>
    </div>
  );
}

function Recorder() {
  return (
    <div className="absolute left-[22px] top-[1209px] w-[112px] h-[317px] rounded-[28px] bg-[#1c1d1f] border border-black flex flex-col items-center">
      <div className="mt-[34px] grid grid-cols-3 gap-x-[8px] gap-y-[8px]">
        {[0, 1, 2, 3, 4, 5].map((i) => <span key={i} className="w-[8px] h-[8px] rounded-full bg-white" />)}
      </div>
      <div className="mt-[27px] w-[80px] h-[80px] rounded-[18px] bg-[#252628] flex items-center justify-center">
        <MicOff className="w-[46px] h-[46px] text-white" strokeWidth={1.7} />
      </div>
      <div className="mt-[8px] w-[80px] h-[80px] rounded-[16px] bg-[#e0241b] flex items-center justify-center">
        <span className="w-[48px] h-[48px] rounded-full border-[3.02px] border-white flex items-center justify-center">
          <span className="w-[16px] h-[16px] rounded-[3px] bg-white" />
        </span>
      </div>
      <div className="mt-[10px] font-['Liberation_Mono',monospace] text-[24px] leading-[34px] text-white">00:03</div>
      <span className="mt-auto mb-[2px] w-[60px] h-[2px] bg-[#555]" />
    </div>
  );
}

export default function App() {
  return (
    <div className="w-[4096px] h-[2648px] overflow-hidden bg-[#0b0b0b]">
      <div className="relative w-[4112px] h-[2658px] [zoom:0.996] bg-[#0b0b0b] flex flex-col">
        <svg viewBox="0 0 4112 2658" className="absolute inset-0 w-full h-full">
          <defs>
            <linearGradient id="st" x1="0" x2="1" y1="0" y2="0">
              <stop offset="0" stopColor="#8a8a8a" />
              <stop offset="0.3" stopColor="#555" />
              <stop offset="1" stopColor="#0d0d0d" />
            </linearGradient>
            <linearGradient id="st2" x1="0" x2="1" y1="0" y2="0">
              <stop offset="0" stopColor="#2c2c2c" />
              <stop offset="1" stopColor="#242424" />
            </linearGradient>
            <filter id="nz" x="0" y="0" width="100%" height="100%">
              <feTurbulence type="fractalNoise" baseFrequency="0.8" numOctaves="2" />
              <feColorMatrix values="0 0 0 0 1  0 0 0 0 1  0 0 0 0 1  0.6 0 0 0 -0.2" />
            </filter>
          </defs>
          <rect width="4112" height="2658" filter="url(#nz)" opacity="0.06" />
          <path d="M1507 0H1620l5 78H1494z" fill="url(#st)" />
          <path d="M0 966L156 1006v6L0 976z" fill="url(#st2)" />
        </svg>
        <MenuBar />
        <div className="relative ml-[156px] mr-[2px] flex-1 min-h-0 flex flex-col rounded-t-[30px] rounded-b-[30px] overflow-hidden">
          <TabStrip />
          <AddressBar />
          <BuilderBar />
          <div className="flex-1 min-h-0 flex">
            <Rail />
            <SettingsPanel />
            <Canvas />
            <Structure />
          </div>
        </div>
        <Recorder />
      </div>
    </div>
  );
}
